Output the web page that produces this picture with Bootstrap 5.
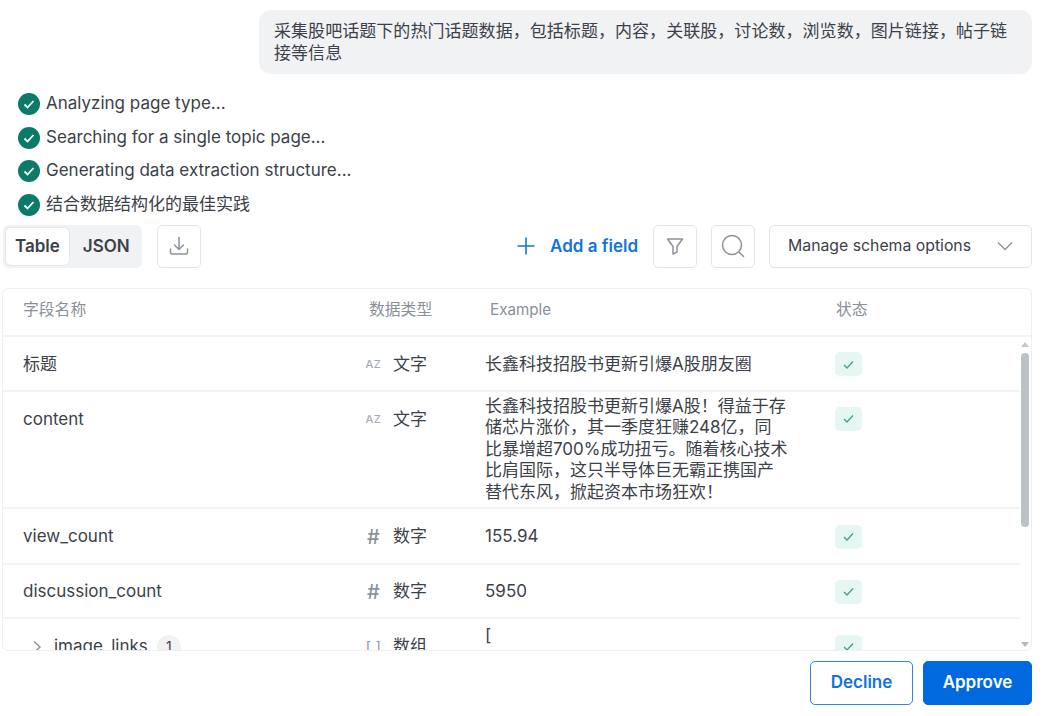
<!DOCTYPE html>
<html lang="zh-CN">
  <head>
    <meta charset="UTF-8" />
    <meta name="viewport" content="width=device-width, initial-scale=1.0" />
    <title>Schema</title>
    <link
      rel="stylesheet"
      href="https://cdn.jsdelivr.net/npm/bootstrap@5.3.0/dist/css/bootstrap.min.css"
    />
    <style>
      html, body { height: 716px; overflow: hidden; }
      body {
        font-family: Inter, "Noto Sans CJK SC", sans-serif;
        font-size: 17px;
        color: #3c4149;
        background: #fff;
      }
      .page-wrap { padding: 10px 17px 0 2px; }
      .chat-bubble {
        width: 773px;
        height: 64px;
        margin-left: auto;
        padding: 10px 15px;
        background: #f1f2f4;
        border-radius: 12px;
        font-size: 17px;
        letter-spacing: .05px;
        line-height: 22px;
      }
      .step-list { margin: 13px 0 0 16px; }
      .step-row { height: 33.7px; gap: 6px; }
      .step-row svg { flex: none; }
      .tool-bar { height: 43px; margin-top: 3px; }
      .view-switch {
        height: 43px;
        width: 139px;
        margin-left: 1px;
        padding: 3px;
        background: #f1f2f4;
        border-radius: 6px;
      }
      .view-btn {
        height: 37px;
        line-height: 37px;
        font-weight: 600;
        padding: 0 9px;
        color: #3c4149;
      }
      .view-btn.on { background: #fff; border-radius: 5px; box-shadow: 0 0 0 1px #e6e8eb; }
      .view-btn + .view-btn { margin-left: 5px; }
      .icon-box {
        width: 44px;
        height: 43px;
        margin-left: 14px;
        background: #fff;
        border: 1px solid #e3e5e8;
        border-radius: 5px;
      }
      .view-switch + .icon-box { margin-left: 15px; }
      .add-field { color: #1273de; font-weight: 600; gap: 14px; margin-right: 1px; }
      .schema-select {
        width: 263px;
        height: 43px;
        margin-left: 14px;
        padding: 0 17px 0 18px;
        border: 1px solid #e3e5e8;
        border-radius: 5px;
        font-size: 15.8px;
      }
      .table-box {
        position: relative;
        height: 363px;
        margin-top: 20px;
        border: 1px solid #eff0f2;
        border-radius: 6px;
        overflow: hidden;
      }
      .schema-head { height: 48px; padding-bottom: 4px; color: #8a9099; font-size: 15.8px; border-bottom: 2px solid #f3f4f5; }
      .schema-line { border-bottom: 2px solid #f3f4f5; margin-right: 11px; padding-top: 2px; }
      .schema-line.top-row { padding-top: 0; align-items: flex-start !important; }
      .schema-line.last-cut { border: 0; height: 60px; }
      .col-name { width: 362px; padding-left: 20px; flex: none; }
      .col-type { width: 120px; flex: none; gap: 11px; }
      .col-example { width: 350px; flex: none; padding-right: 47px; line-height: 21.5px; }
      .schema-head .col-type { padding-left: 4px; }
      .schema-head .col-example { width: 351px; padding-left: 5px; font-size: 15.2px; }
      .type-mark { width: 17px; color: #a8acb2; font-size: 11px; font-weight: 500; letter-spacing: .5px; text-align: center; flex: none; }
      .type-mark.big { font-size: 20px; font-weight: 500; color: #8d939b; letter-spacing: 0; }
      .type-mark.brk { font-size: 14px; font-weight: 400; color: #8d939b; }
      .ok-tag {
        width: 27px;
        height: 24px;
        flex: none;
        background: #e6f7f3;
        border-radius: 5px;
      }
      .top-row .col-name, .top-row .col-type, .top-row .ok-tag { margin-top: 15px; }
      .top-row .col-example { margin-top: 4px; }
      .last-cut .col-name { padding-left: 29px; }
      .last-cut .col-name span.fname { margin-left: 12px; }
      .last-cut .ok-tag { margin-top: 16px; }
      .last-cut .col-example { margin-top: 4px; line-height: 24px; }
      .count-pill {
        width: 24px;
        height: 24px;
        background: #f1f2f4;
        border-radius: 50%;
        font-size: 14px;
        margin-left: 9px;
      }
      .fake-scroll { position: absolute; top: 49px; right: 1px; bottom: 0; width: 10px; background: #fff; }
      .scroll-thumb { position: absolute; top: 15px; left: 1px; width: 8px; height: 174px; background: #bdc2c7; border-radius: 4px; }
      .scroll-up, .scroll-down { position: absolute; left: 1px; width: 0; height: 0; border-left: 4px solid transparent; border-right: 4px solid transparent; }
      .scroll-up { top: 4px; border-bottom: 5px solid #c3c7cb; }
      .scroll-down { bottom: 3px; border-top: 5px solid #b4b8bd; }
      .foot-row { gap: 10px; margin-top: 10px; }
      .foot-btn { height: 44px; font-weight: 600; font-size: 17px; border-radius: 5px; }
      .btn-decline { width: 103px; color: #1273de; background: #fff; border: 1px solid #2f86e6; }
      .btn-approve { width: 109px; color: #fff; background: #0069de; border: 1px solid #0069de; }
    </style>
  </head>
  <body>
    <div class="page-wrap">
      <div class="chat-bubble">采集股吧话题下的热门话题数据，包括标题，内容，关联股，讨论数，浏览数，图片链接，帖子链接等信息</div>

      <div class="step-list" id="steps"></div>

      <div class="tool-bar d-flex align-items-center">
        <div class="view-switch d-flex">
          <div class="view-btn on">Table</div>
          <div class="view-btn">JSON</div>
        </div>
        <div class="icon-box d-flex align-items-center justify-content-center">
          <svg width="22" height="22" viewBox="0 0 22 22" fill="none" stroke="#8d939b" stroke-width="1.5" stroke-linecap="round" stroke-linejoin="round"><path d="M11 2.5v12M6.5 10l4.5 4.5 4.5-4.5M2.5 14v3.5a1.5 1.5 0 0 0 1.5 1.5h14a1.5 1.5 0 0 0 1.5-1.5V14"/></svg>
        </div>
        <div class="add-field d-flex align-items-center ms-auto">
          <svg width="20" height="20" viewBox="0 0 20 20" fill="none" stroke="#1273de" stroke-width="1.6"><path d="M10 1.5v17M1.5 10h17"/></svg>
          <span>Add a field</span>
        </div>
        <div class="icon-box d-flex align-items-center justify-content-center">
          <svg width="20" height="20" viewBox="0 0 20 20" fill="none" stroke="#8d939b" stroke-width="1.5" stroke-linejoin="round"><path d="M2.5 3h15L12 10.5V16l-4 2v-7.5z"/></svg>
        </div>
        <div class="icon-box d-flex align-items-center justify-content-center">
          <svg width="24" height="24" viewBox="0 0 24 24" fill="none" stroke="#8d939b" stroke-width="1.5" stroke-linecap="round"><circle cx="11" cy="11" r="9.5"/><path d="M18 18l4.5 4.5"/></svg>
        </div>
        <div class="schema-select d-flex align-items-center justify-content-between">
          <span>Manage schema options</span>
          <svg width="18" height="18" viewBox="0 0 18 18" fill="none" stroke="#8d939b" stroke-width="1.4"><path d="M2 5.5l7 7 7-7"/></svg>
        </div>
      </div>

      <div class="table-box">
        <div class="schema-head d-flex align-items-center">
          <div class="col-name">字段名称</div>
          <div class="col-type d-flex">数据类型</div>
          <div class="col-example">Example</div>
          <div>状态</div>
        </div>
        <div id="rows"></div>
        <div class="fake-scroll">
          <div class="scroll-up"></div>
          <div class="scroll-thumb"></div>
          <div class="scroll-down"></div>
        </div>
      </div>

      <div class="foot-row d-flex justify-content-end">
        <button class="btn foot-btn btn-decline p-0">Decline</button>
        <button class="btn foot-btn btn-approve p-0">Approve</button>
      </div>
    </div>

    <script src="https://cdn.jsdelivr.net/npm/bootstrap@5.3.0/dist/js/bootstrap.bundle.min.js"></script>
    <script>
      const STEPS = [
        "Analyzing page type...",
        "Searching for a single topic page...",
        "Generating data extraction structure...",
        "结合数据结构化的最佳实践",
      ];
      const FIELDS = [
        { name: "标题", mark: "AZ", type: "文字", h: 55, ex: "长鑫科技招股书更新引爆A股朋友圈" },
        { name: "content", mark: "AZ", type: "文字", h: 117, top: true, ex: "长鑫科技招股书更新引爆A股！得益于存储芯片涨价，其一季度狂赚248亿，同比暴增超700%成功扭亏。随着核心技术比肩国际，这只半导体巨无霸正携国产替代东风，掀起资本市场狂欢！" },
        { name: "view_count", mark: "#", type: "数字", h: 56, ex: "155.94" },
        { name: "discussion_count", mark: "#", type: "数字", h: 54, ex: "5950" },
      ];

      const stepsEl = document.getElementById("steps");
      STEPS.forEach((s) => {
        stepsEl.insertAdjacentHTML("beforeend", `
          <div class="step-row d-flex align-items-center">
            <svg width="22" height="22" viewBox="0 0 22 22"><circle cx="11" cy="11" r="11" fill="#0b7a68"/><path d="M6.5 11.5l3 3 6-6.5" fill="none" stroke="#fff" stroke-width="1.8"/></svg>
            <span>${s}</span>
          </div>`);
      });

      const okTag = `<div class="ok-tag d-flex align-items-center justify-content-center"><svg width="13" height="13" viewBox="0 0 13 13" fill="none" stroke="#3f9f8b" stroke-width="1.3"><path d="M2 7l3 3 6-6.5"/></svg></div>`;
      const rowsEl = document.getElementById("rows");
      FIELDS.forEach((f) => {
        rowsEl.insertAdjacentHTML("beforeend", `
          <div class="schema-line d-flex align-items-center ${f.top ? "top-row" : ""}" style="height:${f.h}px">
            <div class="col-name">${f.name}</div>
            <div class="col-type d-flex align-items-center"><span class="type-mark ${f.mark === "#" ? "big" : ""}">${f.mark}</span><span>${f.type}</span></div>
            <div class="col-example">${f.ex}</div>
            ${okTag}
          </div>`);
      });
      rowsEl.insertAdjacentHTML("beforeend", `
        <div class="schema-line last-cut top-row d-flex">
          <div class="col-name d-flex align-items-center">
            <svg width="10" height="14" viewBox="0 0 10 14" fill="none" stroke="#8d939b" stroke-width="1.4"><path d="M2 1.5L8 7l-6 5.5"/></svg>
            <span class="fname">image_links</span>
            <span class="count-pill d-flex align-items-center justify-content-center">1</span>
          </div>
          <div class="col-type d-flex align-items-center"><span class="type-mark brk">[ ]</span><span>数组</span></div>
          <div class="col-example">[<br>&nbsp;&nbsp;"长鑫科技招股书更新引爆A股"</div>
          ${okTag}
        </div>`);
    </script>
  </body>
</html>
